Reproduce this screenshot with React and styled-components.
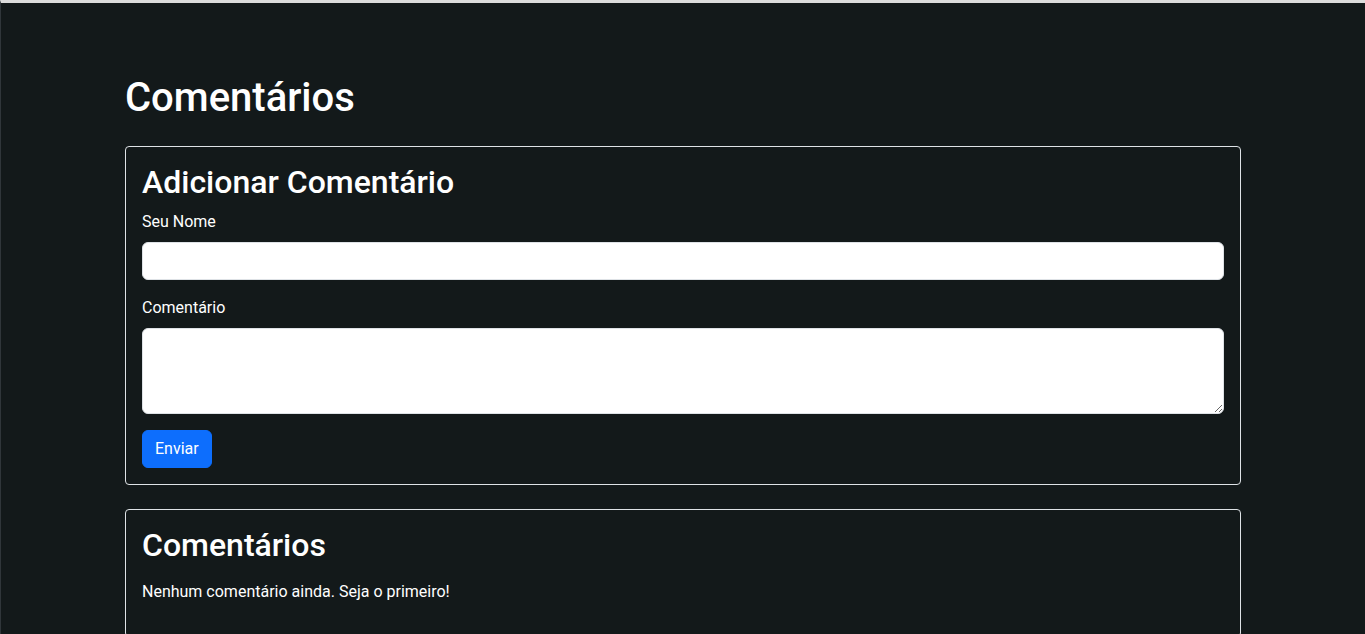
import React, { useState } from 'react';
import styled, { createGlobalStyle } from 'styled-components';

const GlobalStyle = createGlobalStyle`
  * {
    box-sizing: border-box;
  }
  body {
    margin: 0;
    background-color: #13191a;
    color: #fff;
    font-family: Roboto, "Liberation Sans", sans-serif;
    font-size: 16px;
    line-height: 1.5;
  }
`;

const Page = styled.div`
  min-height: 634px;
  border-top: 3px solid #dcdcdc;
  border-left: 1px solid #30363a;
  background-color: #13191a;
`;

const Container = styled.main`
  max-width: 1140px;
  margin: 0 auto;
  padding: 71px 12px 0;
`;

const PageTitle = styled.h1`
  margin: 0 0 24px;
  font-size: 40px;
  font-weight: 500;
  line-height: 1.2;
`;

const Card = styled.section`
  border: 1px solid #dee2e6;
  border-radius: 4px;
  padding: 16px;
  margin-bottom: 24px;
`;

const CardTitle = styled.h2`
  margin: 0 0 ${(p) => p.$gap || 9}px;
  font-size: 32px;
  font-weight: 500;
  line-height: 1.2;
`;

const Field = styled.div`
  margin-bottom: 16px;
`;

const Label = styled.label`
  display: block;
  margin-bottom: 8px;
`;

const Input = styled.input`
  display: block;
  width: 100%;
  height: 38px;
  padding: 6px 12px;
  font: inherit;
  color: #212529;
  background: #fff;
  border: 1px solid #dee2e6;
  border-radius: 6px;
  outline: none;
`;

const TextArea = styled.textarea`
  display: block;
  width: 100%;
  height: 86px;
  padding: 6px 12px;
  font: inherit;
  color: #212529;
  background: #fff;
  border: 1px solid #dee2e6;
  border-radius: 6px;
  outline: none;
  resize: vertical;
`;

const Button = styled.button`
  display: inline-block;
  height: 38px;
  padding: 6px 12px;
  font: inherit;
  color: #fff;
  background-color: #0d6efd;
  border: 1px solid #0d6efd;
  border-radius: 6px;
  cursor: pointer;
`;

const Empty = styled.p`
  margin: 0 0 16px;
`;

export default function App() {
  const [name, setName] = useState('');
  const [text, setText] = useState('');
  const comments = [];

  return (
    <>
      <GlobalStyle />
      <Page>
        <Container>
          <PageTitle>Comentários</PageTitle>

          <Card>
            <CardTitle>Adicionar Comentário</CardTitle>
            <form onSubmit={(e) => e.preventDefault()}>
              <Field>
                <Label htmlFor="nome">Seu Nome</Label>
                <Input id="nome" value={name} onChange={(e) => setName(e.target.value)} />
              </Field>
              <Field>
                <Label htmlFor="comentario">Comentário</Label>
                <TextArea id="comentario" rows={3} value={text} onChange={(e) => setText(e.target.value)} />
              </Field>
              <Button type="submit">Enviar</Button>
            </form>
          </Card>

          <Card>
            <CardTitle $gap={15}>Comentários</CardTitle>
            {comments.length === 0 && <Empty>Nenhum comentário ainda. Seja o primeiro!</Empty>}
          </Card>
        </Container>
      </Page>
    </>
  );
}
